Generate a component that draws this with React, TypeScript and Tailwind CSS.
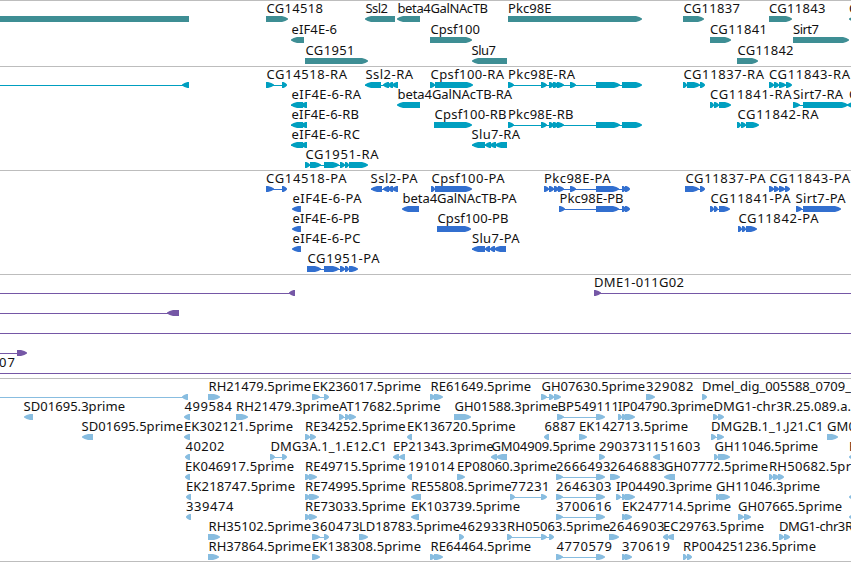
import React from "react";

// [x, text, right edge]
type Label = [number, string, number];
// direction, then [start, end] blocks joined by a thin intron line
type Gene = { dir: "R" | "L" | "N"; blocks: [number, number][]; line?: [number, number] };
type Row = { labels: Label[]; genes: Gene[] };

const R = (...blocks: [number, number][]): Gene => ({ dir: "R", blocks });
const L = (...blocks: [number, number][]): Gene => ({ dir: "L", blocks });
const line = (a: number, b: number): Gene => ({ dir: "N", blocks: [], line: [a, b] });
const row = (labels: Label[], genes: Gene[]): Row => ({ labels, genes });

const genes: Row[] = [
  row(
    [[266.5, "CG14518", 323], [365.5, "Ssl2", 388], [397.5, "beta4GalNAcTB", 488], [508, "Pkc98E", 551.5], [683.5, "CG11837", 740], [769, "CG11843", 825.5], [849, "C", 858]],
    [{ dir: "N", blocks: [[0, 189]] }, R([266, 288]), L([365, 395]), L([397, 420]), R([508, 642]), R([683, 704]), R([769, 792]), L([849, 860])],
  ),
  row(
    [[291.5, "eIF4E-6", 337], [430.5, "Cpsf100", 480], [710, "CG11841", 767], [793, "Sirt7", 819]],
    [L([291, 304]), R([430, 472]), R([710, 731]), R([793, 849])],
  ),
  row(
    [[305.5, "CG1951", 354.5], [471.5, "Slu7", 496], [737.5, "CG11842", 793.5]],
    [R([305, 368]), L([472, 507]), R([737, 758])],
  ),
];

const transcripts: Row[] = [
  row(
    [[266.5, "CG14518-RA", 347], [365.5, "Ssl2-RA", 413], [430.5, "Cpsf100-RA", 504], [508, "Pkc98E-RA", 575], [683.5, "CG11837-RA", 764], [769, "CG11843-RA", 850]],
    [line(0, 183), L([182, 189]), R([266, 274], [282, 287]), L([365, 381], [383, 389], [388, 393], [392, 398]), R([430, 435], [435, 473]),
      R([508, 514], [541, 547], [549, 554], [553, 559], [557, 564], [570, 576], [596, 620], [622, 642]), R([683, 687], [687, 700], [700, 705]), R([769, 774], [774, 779], [779, 786], [786, 792])],
  ),
  row(
    [[291.5, "eIF4E-6-RA", 361], [397.5, "beta4GalNAcTB-RA", 512], [710, "CG11841-RA", 791.5], [793, "Sirt7-RA", 843], [849, "C", 858]],
    [L([291, 303], [301, 307]), L([397, 420]), R([710, 714], [714, 719], [719, 731]), R([793, 800], [803, 848]), L([847, 856])],
  ),
  row(
    [[291.5, "eIF4E-6-RB", 359], [434.5, "Cpsf100-RB", 506.5], [508, "Pkc98E-RB", 573.5], [737.5, "CG11842-RA", 818.5]],
    [L([291, 303], [301, 307]), R([434, 472]), R([508, 514], [541, 547], [549, 554], [553, 559], [557, 564], [596, 620], [622, 642]), R([737, 741], [741, 746], [746, 759])],
  ),
  row(
    [[291.5, "eIF4E-6-RC", 360], [471.5, "Slu7-RA", 520]],
    [L([291, 303], [301, 307]), L([472, 485], [485, 491], [490, 496], [495, 507])],
  ),
  row([[305.5, "CG1951-RA", 378.5]], [R([305, 310], [310, 321], [324, 339], [340, 345], [345, 349], [349, 368])]),
];

const proteins: Row[] = [
  row(
    [[266, "CG14518-PA", 346.5], [370.5, "Ssl2-PA", 417.5], [431.5, "Cpsf100-PA", 504.5], [544, "Pkc98E-PA", 610.5], [685.5, "CG11837-PA", 765.5], [769.5, "CG11843-PA", 850]],
    [R([266, 274], [282, 287]), L([371, 382], [383, 389], [388, 393], [392, 398]), R([431, 435], [435, 472]),
      R([544, 549], [549, 554], [554, 559], [558, 564], [570, 576], [596, 619], [622, 626], [625, 630]), R([685, 699], [700, 705]), R([769, 774], [774, 779], [779, 785], [785, 790])],
  ),
  row(
    [[292.5, "eIF4E-6-PA", 361.5], [402.5, "beta4GalNAcTB-PA", 516.5], [559.5, "Pkc98E-PB", 623.5], [710.5, "CG11841-PA", 790.5], [795.5, "Sirt7-PA", 845.5]],
    [L([292, 301]), L([402, 419]), R([559, 565], [596, 619], [622, 626], [625, 630]), R([710, 714], [714, 718], [719, 730]), R([796, 802], [803, 841])],
  ),
  row(
    [[292.5, "eIF4E-6-PB", 359.5], [437.5, "Cpsf100-PB", 508.5], [738.5, "CG11842-PA", 818.5]],
    [L([292, 301]), R([437, 471]), R([738, 742], [742, 746], [746, 757])],
  ),
  row(
    [[292.5, "eIF4E-6-PC", 360.5], [472, "Slu7-PA", 519.5]],
    [L([292, 301]), L([472, 485], [485, 490], [490, 495], [494, 506])],
  ),
  row([[307.5, "CG1951-PA", 379.5]], [R([307, 321], [324, 339], [340, 345], [345, 349], [349, 358])]),
];

const clones: Row[] = [
  row([[594, "DME1-011G02", 684]], [line(0, 290), L([289, 295]), R([594, 601]), line(594, 851)]),
  row([], [line(0, 168), L([167, 179])]),
  row([], [line(0, 851)]),
  row([], [line(0, 17), R([17, 27])]),
  row([[-1, "07", 15]], [line(0, 851)]),
];

const ests: Row[] = [
  row(
    [[208.5, "RH21479.5prime", 311], [312.5, "EK236017.5prime", 421], [430.5, "RE61649.5prime", 531], [541.5, "GH07630.5prime", 645], [646, "329082", 693.5], [702, "Dmel_dig_005588_0709_", 851]],
    [line(0, 183), L([182, 188]), R([208, 220]), R([312, 320], [324, 329]), R([430, 435], [434, 443]), R([541, 547], [549, 554], [554, 561]), R([646, 655]), R([702, 707])],
  ),
  row(
    [[23.5, "SD01695.3prime", 125], [184.5, "499584", 232], [236, "RH21479.3prime", 339], [339, "AT17682.5prime", 440.5], [454.5, "GH01588.3prime", 558], [557.5, "BP549111", 619], [618, "IP04790.3prime", 713.5], [713.5, "DMG1-chr3R.25.089.a.", 851]],
    [L([24, 33]), L([184, 190]), R([236, 248]), R([339, 344], [345, 350], [349, 356]), R([454, 471]), R([557, 564], [596, 605]), R([618, 622], [622, 627], [625, 635]), R([713, 718], [718, 724])],
  ),
  row(
    [[81.5, "SD01695.5prime", 183], [184, "EK302121.5prime", 293], [305, "RE34252.5prime", 405.5], [407, "EK136720.5prime", 515.5], [544.5, "6887", 575.5], [579, "EK142713.5prime", 688], [711, "DMG2B.1_1.J21.C1", 823.5], [827, "GM0", 856]],
    [L([82, 93]), L([184, 190]), R([305, 310], [310, 316]), L([407, 412]), L([544, 549]), R([579, 587]), R([711, 716], [717, 724]), R([827, 838])],
  ),
  row(
    [[185.5, "40202", 224.5], [270.5, "DMG3A.1_1.E12.C1", 387], [393, "EP21343.3prime", 493.5], [491.5, "GM04909.5prime", 595.5], [599, "2903731", 653], [652.5, "151603", 700.5], [714.5, "GH11046.5prime", 818], [849, "R", 857]],
    [L([185, 190]), R([270, 275], [282, 287]), L([393, 399], [399, 405]), L([491, 497], [496, 507]), R([599, 605]), L([653, 660]), R([714, 718], [718, 730]), L([849, 855])],
  ),
  row(
    [[185, "EK046917.5prime", 294], [305, "RE49715.5prime", 405.5], [408, "191014", 454.5], [457, "EP08060.3prime", 557], [556, "2666493", 610.5], [610, "2646883", 665], [664, "GH07772.5prime", 768], [769, "RH50682.5pr", 851]],
    [L([185, 190]), R([305, 310], [309, 317]), L([407, 412]), R([457, 465]), R([556, 563], [596, 605]), R([610, 620]), L([664, 675]), R([769, 773], [773, 779], [778, 784])],
  ),
  row(
    [[186, "EK218747.5prime", 295], [305, "RE74995.5prime", 405.5], [411, "RE55808.5prime", 511.5], [510.5, "77231", 549.5], [556, "2646303", 611.5], [616, "IP04490.3prime", 712], [716, "GH11046.3prime", 820]],
    [L([186, 191]), R([305, 310], [309, 319]), L([411, 421]), R([510, 515], [541, 547]), R([556, 563], [596, 605]), R([616, 621], [622, 627], [625, 635]), R([716, 720], [719, 730]), L([849, 855])],
  ),
  row(
    [[186, "339474", 233.5], [305, "RE73033.5prime", 405.5], [411, "EK103739.5prime", 520], [556, "3700616", 611.5], [622, "EK247714.5prime", 731], [738, "GH07665.5prime", 842]],
    [L([186, 191]), R([305, 310], [309, 317]), L([411, 419]), R([556, 563], [596, 605]), R([622, 627], [625, 632]), R([738, 744], [744, 751]), L([849, 855])],
  ),
  row(
    [[208.5, "RH35102.5prime", 311], [312, "360473", 359.5], [359, "LD18783.5prime", 460], [459.5, "462933", 506.5], [507, "RH05063.5prime", 610], [609, "2646903", 664.5], [663, "EC29763.5prime", 764], [779, "DMG1-chr3R", 853]],
    [R([208, 220]), R([312, 320], [324, 329]), R([359, 368]), R([459, 464]), R([507, 512], [541, 547], [549, 554]), R([609, 619]), L([663, 668], [667, 674]), R([779, 784], [784, 790])],
  ),
  row(
    [[208.5, "RH37864.5prime", 311], [312, "EK138308.5prime", 421], [430.5, "RE64464.5prime", 531], [556.5, "4770579", 612], [622, "370619", 670], [683, "RP004251236.5prime", 816]],
    [R([208, 219]), R([312, 320]), R([430, 435], [434, 443]), R([556, 563], [596, 605]), R([622, 627], [625, 632]), R([683, 687], [687, 692])],
  ),
];

function outline(dir: Gene["dir"], a: number, b: number) {
  const head = Math.min(6, b - a - 1.5);
  const s = dir === "R" ? 1 : -1;
  const tail = dir === "R" ? a : b;
  const tip = dir === "R" ? b : a;
  const neck = tip - s * head;
  const mid = tip - s * head * 0.45;
  return `${tail},15 ${neck},15 ${mid},16 ${tip},17.6 ${tip},18.6 ${mid},20 ${neck},21 ${tail},21`;
}

function Glyph({ gene }: { gene: Gene }) {
  const { blocks, dir } = gene;
  const span = gene.line ?? (blocks.length > 1 ? [blocks[0][0], blocks[blocks.length - 1][1] - 1] : null);
  return (
    <g>
      {span && <rect x={span[0]} y={18} width={span[1] - span[0]} height={1} />}
      {blocks.map(([a, b]) =>
        dir === "N" ? (
          <rect key={a} x={a} y={15} width={b - a} height={6} />
        ) : (
          <polygon key={a} points={outline(dir, a, b)} />
        ),
      )}
    </g>
  );
}

function Track({ rows, color, rowClass, className }: { rows: Row[]; color: string; rowClass: string; className: string }) {
  return (
    <section className={`flex flex-col border-t border-[#bdbdbd] ${className}`}>
      {rows.map((r, i) => (
        <div key={i} className={rowClass}>
          <svg width="851" height="22" className={`block overflow-visible ${color}`}>
            {r.genes.map((g, j) => (
              <Glyph key={j} gene={g} />
            ))}
            {r.labels.map(([x, text, end]) => (
              <text key={x} x={x} y={12} textLength={end - x} className="fill-[#111111] font-['Noto_Sans',sans-serif] text-[13px]">
                {text}
              </text>
            ))}
          </svg>
        </div>
      ))}
    </section>
  );
}

export default function App() {
  return (
    <main className="flex h-[562px] w-[851px] flex-col overflow-hidden border-b border-[#bdbdbd] bg-white">
      <Track rows={genes} color="fill-[#3e8e94]" rowClass="h-[21px]" className="h-[66px]" />
      <Track rows={transcripts} color="fill-[#009fc0]" rowClass="h-5" className="h-[104px]" />
      <Track rows={proteins} color="fill-[#326fcf]" rowClass="h-5" className="h-[104px]" />
      <Track rows={clones} color="fill-[#7557a6]" rowClass="h-5" className="h-[104px]" />
      <Track rows={ests} color="fill-[#88bde0]" rowClass="h-5" className="h-[183px]" />
    </main>
  );
}
